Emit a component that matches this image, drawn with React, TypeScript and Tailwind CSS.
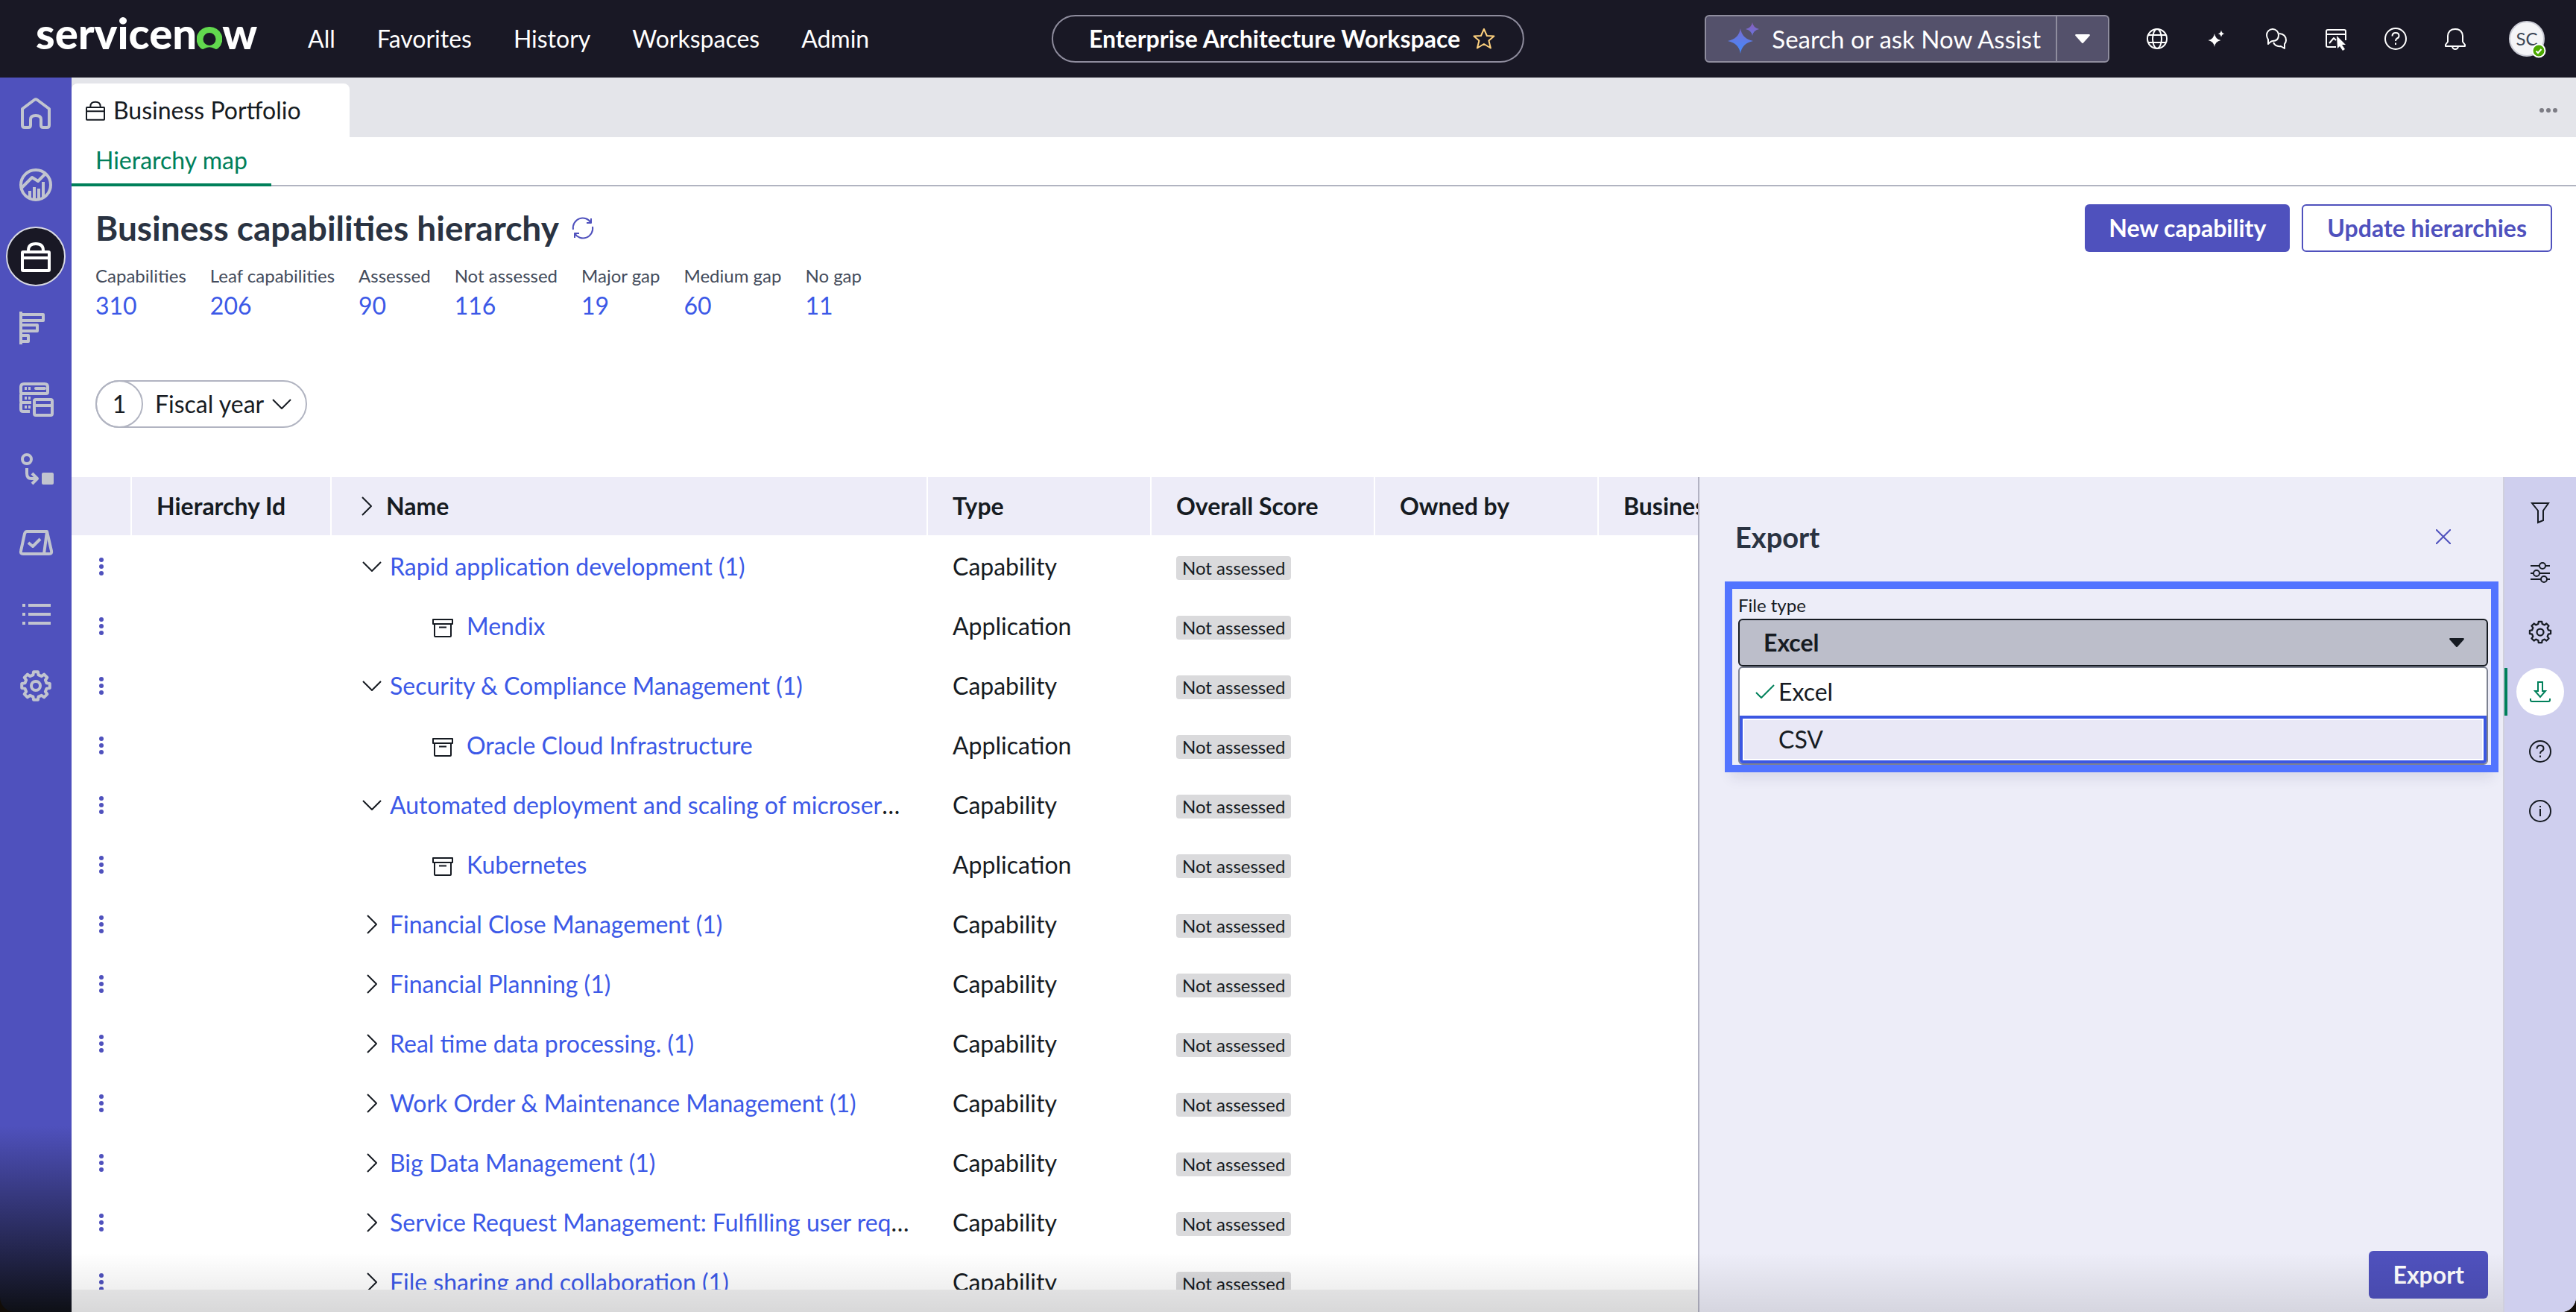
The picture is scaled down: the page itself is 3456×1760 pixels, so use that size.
import React from 'react';

type IconProps = { className?: string };

/* --- ICONS --- */
const gearPath = (c: number, outer: number, inner: number, teeth: number) => {
  const step = (Math.PI * 2) / teeth;
  const points: string[] = [];
  for (let i = 0; i < teeth; i++) {
    const a = i * step - Math.PI / 2;
    const corners = [
      [a - step * 0.31, inner],
      [a - step * 0.2, outer],
      [a + step * 0.2, outer],
      [a + step * 0.31, inner],
    ];
    corners.forEach(([angle, r]) => {
      points.push(`${(c + Math.cos(angle) * r).toFixed(2)} ${(c + Math.sin(angle) * r).toFixed(2)}`);
    });
  }
  return `M${points.join('L')}Z`;
};

const Stroke = ({
  className = '',
  box = 32,
  width = 2,
  children,
}: IconProps & { box?: number; width?: number; children: React.ReactNode }) => (
  <svg
    viewBox={`0 0 ${box} ${box}`}
    className={`shrink-0 ${className}`}
    fill="none"
    stroke="currentColor"
    strokeWidth={width}
    strokeLinejoin="round"
    aria-hidden="true"
  >
    {children}
  </svg>
);

const HomeIcon = () => (
  <Stroke box={48} width={4} className="size-12">
    <path d="M6 18 L22 6 Q24 4.500 26 6 L42 18 V40 Q42 43 39 43 H34 Q31 43 31 40 V32 Q31 27 24 27 Q17 27 17 32 V40 Q17 43 14 43 H9 Q6 43 6 40 Z" />
  </Stroke>
);

const AnalyticsIcon = () => (
  <Stroke box={48} width={4} className="size-12">
    <circle cx="24" cy="24" r="20" />
    <path d="M5 28 L19 14 L27 19 L37 9" />
    <path d="M16 32 V41 M22 27 V43 M28 29 V43 M34 20 V40" />
  </Stroke>
);

const BriefcaseIcon = ({ className = 'size-12', width = 4 }: IconProps & { width?: number }) => (
  <Stroke box={48} width={width} className={className}>
    <rect x="6" y="18" width="36" height="25" rx="1" />
    <path d="M6 26 H42 M14 18 V16 Q14 7 24 7 Q34 7 34 16 V18" />
  </Stroke>
);

const BarsIcon = () => (
  <Stroke box={48} width={4} className="size-12">
    <path d="M4 2 V46" />
    <path d="M4 6 H34 V14 H4 M4 20 H26 V28 H4 M4 34 H14 V42 H4" />
  </Stroke>
);

const InventoryIcon = () => (
  <Stroke box={48} width={4} className="size-12">
    <path d="M16 40 H7 Q4 40 4 37 V30 Q4 28 6 28 H18 M6 28 Q4 28 4 26 V17 M6 16 Q4 16 4 14 V7 Q4 3 8 3 H36 Q40 3 40 7 V14 Q40 16 38 16 H6 Q4 16 4 18" />
    <rect x="22" y="24" width="24" height="21" rx="2" />
    <path d="M22 32 H46" />
    <path d="M24 9 H36" strokeLinecap="round" />
    <path d="M9 9 H12 M14 9 H17 M9 22 H12 M14 22 H17 M9 34 H12 M14 34 H17" />
  </Stroke>
);

const FlowIcon = () => (
  <Stroke box={48} width={4} className="size-12">
    <circle cx="12" cy="8" r="6" />
    <path d="M12 20 V27 Q12 34 18 34 H26 M19 27 L26 34 L19 41" />
    <rect x="32" y="26" width="16" height="16" rx="2" fill="currentColor" stroke="none" />
  </Stroke>
);

const ReviewIcon = () => (
  <Stroke box={48} width={4} className="size-12">
    <path d="M12 9 H39 L35 39 H7 Q3 39 4 35 L9 12 Q10 9 12 9 Z" />
    <path d="M39 9 L45 35 Q46 39 42 39 H34" />
    <path d="M14 24 L20 29 L30 19" />
  </Stroke>
);

const ListIcon = () => (
  <Stroke box={48} width={4} className="size-12">
    <path d="M6 12 H10 M6 24 H10 M6 36 H10 M14 12 H44 M14 24 H44 M14 36 H44" />
  </Stroke>
);

const CogIcon = ({ className = 'size-12', width = 4 }: IconProps & { width?: number }) => (
  <Stroke box={48} width={width} className={className}>
    <path d={gearPath(24, 19, 15, 8)} />
    <circle cx="24" cy="24" r="6" />
  </Stroke>
);

const HelpIcon = ({ className = 'size-8' }: IconProps) => (
  <Stroke className={className}>
    <circle cx="16" cy="16" r="14" />
    <path d="M11.500 12.500 Q11.500 8 16 8 Q20.500 8 20.500 12 Q20.500 14.500 18 15.500 Q16 16.500 16 19" />
    <path d="M16 21.500 V24" />
  </Stroke>
);

const SparkleIcon = ({ className = '' }: IconProps) => (
  <svg viewBox="0 0 48 48" className={`shrink-0 ${className}`} fill="currentColor" aria-hidden="true">
    <path d="M18 10 Q20 25 35 28 Q20 31 18 46 Q16 31 1 28 Q16 25 18 10 Z" />
    <path d="M36 1 Q37 9 45 10.500 Q37 12 36 20 Q35 12 27 10.500 Q35 9 36 1 Z" />
  </svg>
);

const Caret = ({ className = '' }: IconProps) => (
  <svg viewBox="0 0 20 12" className={`h-3 w-5 ${className}`} fill="currentColor" aria-hidden="true">
    <path d="M1 0 H19 Q20.500 0.500 19.500 2 L11 11.500 Q10 12.500 9 11.500 L0.500 2 Q-0.500 0.500 1 0 Z" />
  </svg>
);

const ChevronDown = ({ className = '' }: IconProps) => (
  <Stroke box={28} className={`size-7 ${className}`}>
    <path d="M2 8 L14 20 L26 8" />
  </Stroke>
);

const ChevronRight = ({ className = '' }: IconProps) => (
  <Stroke box={28} className={`size-7 ${className}`}>
    <path d="M8 2 L20 14 L8 26" />
  </Stroke>
);

const ArchiveIcon = () => (
  <Stroke box={28} className="mt-1 size-7 text-[#161b22]">
    <rect x="1" y="3" width="26" height="6" />
    <path d="M3 9 V25 Q3 26 4 26 H24 Q25 26 25 25 V9 M9 13.500 H19" />
  </Stroke>
);

const KebabIcon = () => (
  <svg viewBox="0 0 8 26" className="h-[26px] w-2" fill="currentColor" aria-hidden="true">
    <circle cx="4" cy="4" r="3" />
    <circle cx="4" cy="13" r="3" />
    <circle cx="4" cy="22" r="3" />
  </svg>
);

/* --- DATA --- */
const navLinks = ['All', 'Favorites', 'History', 'Workspaces', 'Admin'];

const sideItems = [
  { label: 'Home', icon: <HomeIcon /> },
  { label: 'Analytics', icon: <AnalyticsIcon /> },
  { label: 'Business Portfolio', icon: <BriefcaseIcon className="size-12" />, active: true },
  { label: 'Roadmap', icon: <BarsIcon /> },
  { label: 'Inventory', icon: <InventoryIcon /> },
  { label: 'Workflow', icon: <FlowIcon /> },
  { label: 'Reviews', icon: <ReviewIcon /> },
  { label: 'Lists', icon: <ListIcon /> },
  { label: 'Settings', icon: <CogIcon /> },
];

const stats = [
  { label: 'Capabilities', value: 310 },
  { label: 'Leaf capabilities', value: 206 },
  { label: 'Assessed', value: 90 },
  { label: 'Not assessed', value: 116 },
  { label: 'Major gap', value: 19 },
  { label: 'Medium gap', value: 60 },
  { label: 'No gap', value: 11 },
];

const rows = [
  { name: 'Rapid application development (1)', kind: 'open' },
  { name: 'Mendix', kind: 'app' },
  { name: 'Security & Compliance Management (1)', kind: 'open' },
  { name: 'Oracle Cloud Infrastructure', kind: 'app' },
  { name: 'Automated deployment and scaling of microservices (1)', kind: 'open' },
  { name: 'Kubernetes', kind: 'app' },
  { name: 'Financial Close Management (1)', kind: 'closed' },
  { name: 'Financial Planning (1)', kind: 'closed' },
  { name: 'Real time data processing. (1)', kind: 'closed' },
  { name: 'Work Order & Maintenance Management (1)', kind: 'closed' },
  { name: 'Big Data Management (1)', kind: 'closed' },
  { name: 'Service Request Management: Fulfilling user requests (1)', kind: 'closed' },
  { name: 'File sharing and collaboration (1)', kind: 'closed' },
];

const railItems = [
  {
    label: 'Filter',
    icon: (
      <Stroke className="size-8">
        <path d="M5 3 H27 L20 13 V26 L13 29 V13 Z" strokeLinejoin="miter" />
      </Stroke>
    ),
  },
  {
    label: 'Adjust',
    icon: (
      <Stroke className="size-8">
        <path d="M3 7 H15 M23 7 H29 M3 17 H7 M15 17 H29 M3 25 H17 M25 25 H29" />
        <circle cx="19" cy="7" r="4" />
        <circle cx="11" cy="17" r="4" />
        <circle cx="21" cy="25" r="4" />
      </Stroke>
    ),
  },
  { label: 'Settings', icon: <CogIcon className="size-9" width={3} /> },
  {
    label: 'Export',
    active: true,
    icon: (
      <Stroke className="size-8">
        <path d="M13 3 H19 V15 H23 L16 23 L9 15 H13 Z" strokeLinejoin="miter" />
        <path d="M3 25 V27 Q3 29 5 29 H27 Q29 29 29 27 V25" />
      </Stroke>
    ),
  },
  { label: 'Help', icon: <HelpIcon className="size-8" /> },
  {
    label: 'Info',
    icon: (
      <Stroke className="size-8">
        <circle cx="16" cy="16" r="14" />
        <path d="M16 13 V23 M16 9 V11" />
      </Stroke>
    ),
  },
];

/* --- TOP BAR --- */
const TopBar = () => (
  <header className="relative flex h-[104px] shrink-0 items-center justify-between bg-[#191825] pr-[42px] pl-12 text-white">
    <div className="flex items-center">
      <a href="#" aria-label="servicenow" className="mr-[68px] flex items-baseline pb-4 text-[58px] leading-[64px] font-black">
        servicen
        <svg viewBox="0 0 34 30" className="h-[30px] w-[34px]" fill="#62d84e" aria-hidden="true">
          <path d="M17 0 A17 16.500 0 0 0 5 28.500 Q7.500 31 10.500 29 Q17 25.500 23.500 29 Q26.500 31 29 28.500 A17 16.500 0 0 0 17 0 Z M17 25 A8.500 8.500 0 1 1 17 8 A8.500 8.500 0 0 1 17 25 Z" fillRule="evenodd" />
        </svg>
        w
      </a>
      <nav className="flex gap-14">
        {navLinks.map((link) => (
          <a key={link} href="#">{link}</a>
        ))}
      </nav>
    </div>

    <button className="absolute left-1/2 flex h-16 -translate-x-1/2 items-center gap-4 rounded-full border-2 border-[#8e8c9d] pr-9 pl-12 font-bold whitespace-nowrap">
      Enterprise Architecture Workspace
      <Stroke className="size-8 text-[#ffd27f]">
        <path d="M16 3 L20 12 L29.500 12.500 L22.500 18.500 L25 28.500 L16 23 L7 28.500 L9.500 18.500 L2.500 12.500 L12 12 Z" />
      </Stroke>
    </button>

    <div className="flex items-center">
      <div className="mr-6 flex h-16 items-stretch overflow-hidden rounded-md border-2 border-[#8f8d9e] bg-[#54516b]">
        <button className="flex items-center gap-3 pr-5 pl-7 text-[33px]">
          <svg viewBox="0 0 48 48" className="size-12" aria-hidden="true">
            <defs>
              <linearGradient id="assist" x1="0" y1="0" x2="0" y2="1">
                <stop offset="0" stopColor="#8a5cb8" />
                <stop offset="0.4" stopColor="#6a74dc" />
                <stop offset="1" stopColor="#3f8bff" />
              </linearGradient>
            </defs>
            <path
              fill="url(#assist)"
              d="M18 10 Q20 24 35 27 Q20 30 18 44 Q16 30 1 27 Q16 24 18 10 Z M34 2 Q35 9 43 11 Q35 13 34 20 Q33 13 25 11 Q33 9 34 2 Z"
            />
          </svg>
          Search or ask Now Assist
        </button>
        <button aria-label="Search options" className="flex w-[70px] items-center justify-center border-l-2 border-[#8f8d9e]">
          <Caret />
        </button>
      </div>

      <div className="mr-8 flex items-center">
        <button aria-label="Language" className="flex w-20 justify-center">
          <Stroke className="size-8">
            <circle cx="16" cy="16" r="13" />
            <ellipse cx="16" cy="16" rx="6" ry="13" />
            <path d="M4 11 H28 M4 21 H28" />
          </Stroke>
        </button>
        <button aria-label="Now Assist" className="flex w-20 justify-center">
          <SparkleIcon className="size-6" />
        </button>
        <button aria-label="Conversations" className="flex w-20 justify-center">
          <Stroke className="size-8">
            <path d="M5 23 V17 Q3 14 3 11 A8 8 0 0 1 19 11 Q19 19 11 19 Q9 19 5 23 Z" />
            <path d="M20 9 Q29 10 29 18 Q29 21 27 23 V29 L22 26 Q15 27 12 21" />
          </Stroke>
        </button>
        <button aria-label="Screen capture" className="flex w-20 justify-center">
          <Stroke className="size-8">
            <path d="M16 27 H5 Q3 27 3 25 V6 Q3 4 5 4 H27 Q29 4 29 6 V18 M3 10 H29 M7 22 L13 15 L16 18" />
            <path d="M17 12 L29 24 L24 24 L28 30 L25 32 L21 26 L18 29 Z" fill="currentColor" stroke="none" />
          </Stroke>
        </button>
        <button aria-label="Help" className="flex w-20 justify-center">
          <HelpIcon />
        </button>
        <button aria-label="Notifications" className="flex w-20 justify-center">
          <Stroke className="size-8">
            <path d="M3 26 V24 L6 20 V12 Q7 3 16 3 Q25 3 26 12 V20 L29 24 V26 Z M12 27 Q13 30 16 30 Q19 30 20 27" />
          </Stroke>
        </button>
      </div>

      <button aria-label="SC profile" className="relative flex size-12 items-center justify-center rounded-full border-2 border-[#c9cad4] bg-[#f4f4f7] text-2xl text-[#3b4656]">
        SC
        <svg viewBox="0 0 20 20" className="absolute -right-1 -bottom-1 size-5" aria-hidden="true">
          <circle cx="10" cy="10" r="8.500" fill="#4ba800" stroke="#fff" strokeWidth="2" />
          <path d="M6.500 10.500 L9 13 L13.500 8" fill="none" stroke="#fff" strokeWidth="2" />
        </svg>
      </button>
    </div>
  </header>
);

/* --- LEFT NAVIGATION --- */
const SideNav = () => (
  <nav className="flex w-24 shrink-0 flex-col items-center gap-4 overflow-hidden rounded-bl-[20px] bg-[#4f51bd] bg-[linear-gradient(to_top,#0e1016_0,#4f51bd_250px)] pt-2">
    {sideItems.map((item) => (
      <a
        key={item.label}
        href="#"
        aria-label={item.label}
        className={
          item.active
            ? 'flex size-20 items-center justify-center rounded-full border-2 border-[#d8d9e4] bg-[#191825] text-white'
            : 'flex size-20 items-center justify-center text-[#c1c4cf]'
        }
      >
        {item.icon}
      </a>
    ))}
  </nav>
);

/* --- HIERARCHY TABLE --- */
const HierarchyTable = () => (
  <table className="w-[2349px] table-fixed border-separate border-spacing-0 text-left">
    <colgroup>
      <col className="w-[81px]" />
      <col className="w-[268px]" />
      <col className="w-[800px]" />
      <col className="w-[300px]" />
      <col className="w-[300px]" />
      <col className="w-[300px]" />
      <col className="w-[300px]" />
    </colgroup>
    <thead>
      <tr className="h-20 bg-[#edecf8] font-bold">
        <td className="border-r-2 border-b-2 border-white" />
        <th className="border-r-2 border-b-2 border-white pl-[33px]">Hierarchy Id</th>
        <th className="border-r-2 border-b-2 border-white pl-[33px]">
          <span className="flex items-center gap-3">
            <ChevronRight />
            Name
          </span>
        </th>
        <th className="border-r-2 border-b-2 border-white pl-[33px]">Type</th>
        <th className="border-r-2 border-b-2 border-white pl-[33px]">Overall Score</th>
        <th className="border-r-2 border-b-2 border-white pl-[33px]">Owned by</th>
        <th className="border-b-2 border-white pl-[33px]">Business</th>
      </tr>
    </thead>
    <tbody>
      {rows.map((row) => (
        <tr key={row.name} className="h-20">
          <td className="pl-9">
            <button aria-label={`Actions for ${row.name}`} className="flex text-[#4f51bd]">
              <KebabIcon />
            </button>
          </td>
          <td />
          <td className={row.kind === 'app' ? 'pr-6 pl-[135px]' : 'pr-6 pl-10'}>
            <div className="flex items-center">
              {row.kind === 'app' && <ArchiveIcon />}
              {row.kind === 'open' && (
                <button aria-label="Collapse"><ChevronDown /></button>
              )}
              {row.kind === 'closed' && (
                <button aria-label="Expand"><ChevronRight /></button>
              )}
              <span className={row.kind === 'app' ? 'ml-[18px] truncate' : 'ml-[10px] truncate'}>
                <a href="#" className="text-[#3c59e7]">{row.name}</a>
              </span>
            </div>
          </td>
          <td className="pl-[33px]">{row.kind === 'app' ? 'Application' : 'Capability'}</td>
          <td className="pl-[33px]">
            <span className="mt-1 block h-8 w-fit rounded-sm bg-[#dadadc] px-2 text-2xl leading-8">Not assessed</span>
          </td>
          <td />
          <td />
        </tr>
      ))}
    </tbody>
  </table>
);

/* --- EXPORT PANEL --- */
const ExportPanel = () => (
  <aside className="flex w-[1080px] shrink-0 flex-col border-l-2 border-[#b3b3c3] bg-[#ededf8] pt-12">
    <div className="mb-7 flex h-16 items-center justify-between pr-[70px] pl-12">
      <h2 className="text-[38px] leading-[48px] font-bold text-[#2a3342]">Export</h2>
      <button aria-label="Close" className="text-[#4f51bd]">
        <Stroke box={20} className="size-5">
          <path d="M0 0 L20 20 M20 0 L0 20" />
        </Stroke>
      </button>
    </div>

    <div className="mr-1.5 ml-[34px] border-[10px] border-[#5274ff] pt-1.5 pr-1 pl-2 shadow-[0_16px_16px_-8px_rgba(40,40,90,0.1)]">
      <label htmlFor="file-type" className="mb-0.5 block text-2xl leading-8">File type</label>
      <div className="relative">
        <select
          id="file-type"
          defaultValue="Excel"
          className="block h-16 w-full appearance-none rounded-md border-2 border-[#161b22] bg-[#bcbeca] pr-16 pl-8 font-bold"
        >
          <option>Excel</option>
          <option>CSV</option>
        </select>
        <Caret className="pointer-events-none absolute top-[26px] right-8" />
      </div>
      <ul role="listbox" aria-label="File type" className="overflow-hidden rounded-md border-2 border-[#7d8291] bg-white">
        <li role="option" aria-selected="true" className="flex h-16 items-center gap-1 pl-5">
          <Stroke box={28} className="size-7 text-[#00805a]">
            <path d="M2 15 L9 22 L26 5" />
          </Stroke>
          Excel
        </li>
        <li role="option" aria-selected="false" className="h-16 border-4 border-[#3b57e2] bg-white p-0.5">
          <div className="flex h-full items-center bg-[#e9e8f6] pl-[46px]">CSV</div>
        </li>
      </ul>
    </div>

    <button className="mt-auto mr-5 mb-[18px] h-16 self-end rounded-md bg-[#4f51bd] px-8 font-bold text-white">
      Export
    </button>
  </aside>
);

const ToolRail = () => (
  <nav className="flex w-[98px] shrink-0 flex-col gap-4 rounded-br-[20px] border-l-2 border-[#d0d0dc] bg-[#cfcfee] pt-4">
    {railItems.map((item) => (
      <div
        key={item.label}
        className={
          item.active
            ? 'flex h-16 justify-center border-l-4 border-[#00805a] pr-1 text-[#00805a]'
            : 'flex h-16 justify-center'
        }
      >
        <button
          aria-label={item.label}
          className={
            item.active
              ? 'flex size-16 items-center justify-center rounded-full bg-white'
              : 'flex size-16 items-center justify-center'
          }
        >
          {item.icon}
        </button>
      </div>
    ))}
  </nav>
);

export default function App() {
  return (
    <div className="flex h-screen flex-col overflow-hidden bg-[#120d08] font-[Lato,sans-serif] text-[32px] leading-[40px] text-[#161b22]">
      <TopBar />
      <div className="flex min-h-0 flex-1">
        <SideNav />
        <main className="flex min-w-0 flex-1 flex-col rounded-br-[20px] bg-white">
          {/* --- TABS --- */}
          <div className="flex h-20 shrink-0 items-end justify-between bg-[#e4e5ea] pr-6">
            <a href="#" className="flex h-[72px] w-[373px] items-center gap-2 rounded-t-lg bg-white pl-4">
              <BriefcaseIcon className="size-8" width={3} />
              Business Portfolio
            </a>
            <button aria-label="More tabs" className="mb-8 text-[#7c7c84]">
              <svg viewBox="0 0 26 8" className="h-2 w-[26px]" fill="currentColor" aria-hidden="true">
                <circle cx="4" cy="4" r="3" />
                <circle cx="13" cy="4" r="3" />
                <circle cx="22" cy="4" r="3" />
              </svg>
            </button>
          </div>
          <div className="flex h-[66px] shrink-0 border-b-2 border-[#b1b4c1]">
            <a href="#" className="-mb-0.5 flex items-center border-b-4 border-[#00805a] px-8 text-[#00805a]">
              Hierarchy map
            </a>
          </div>

          {/* --- PAGE HEADING --- */}
          <section className="flex shrink-0 justify-between px-8 pt-6">
            <div>
              <div className="flex h-16 items-center gap-4">
                <h1 className="text-[46px] leading-[64px] font-bold text-[#2a3342]">Business capabilities hierarchy</h1>
                <button aria-label="Refresh" className="text-[#4f51bd]">
                  <Stroke className="size-8">
                    <path d="M3 18 A13 13 0 0 1 27 9 M27 3 V9 H21 M29 14 A13 13 0 0 1 5 23 M5 29 V23 H11" />
                  </Stroke>
                </button>
              </div>
              <dl className="mt-4 flex gap-8">
                {stats.map((stat) => (
                  <div key={stat.label}>
                    <dt className="text-2xl leading-8 text-[#444c5c]">{stat.label}</dt>
                    <dd className="mt-1">
                      <a href="#" className="text-[#3c59e7]">{stat.value}</a>
                    </dd>
                  </div>
                ))}
              </dl>
            </div>
            <div className="flex gap-4">
              <button className="h-16 rounded-md bg-[#4f51bd] px-8 font-bold text-white">New capability</button>
              <button className="h-16 rounded-md border-2 border-[#4f51bd] px-8 font-bold text-[#4f51bd]">
                Update hierarchies
              </button>
            </div>
          </section>

          <div className="mt-20 mb-[66px] shrink-0 px-8">
            <button className="flex h-16 items-center rounded-full border-2 border-[#b1b4c1] pr-[18px]">
              <span className="-ml-0.5 flex size-16 items-center justify-center rounded-full border-2 border-[#b1b4c1]">1</span>
              <span className="mr-2.5 ml-4">Fiscal year</span>
              <ChevronDown />
            </button>
          </div>

          {/* --- CONTENT --- */}
          <div className="relative flex min-h-0 flex-1">
            <div className="flex min-w-0 flex-1 flex-col">
              <div className="min-h-0 flex-1 overflow-hidden">
                <HierarchyTable />
              </div>
              <div className="h-[30px] shrink-0 bg-[#f0f0f1]" />
            </div>
            <ExportPanel />
            <ToolRail />
            <div className="pointer-events-none absolute right-[98px] bottom-0 left-0 h-20 bg-gradient-to-b from-transparent to-black/10" />
          </div>
        </main>
      </div>
    </div>
  );
}
